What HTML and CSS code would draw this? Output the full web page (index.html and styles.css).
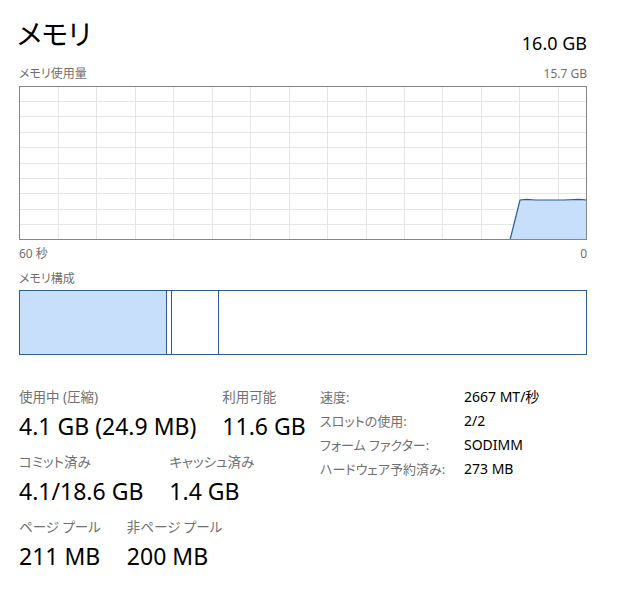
FILE: index.html
```html
<!DOCTYPE html>
<html lang="ja">
<head>
    <meta charset="UTF-8">
    <title>メモリ</title>
    <link rel="stylesheet" href="styles.css">
</head>
<body>
    <div class="perf">
        <div class="perf-head">
            <h1 class="perf-title">メモリ</h1>
            <div class="perf-total">16.0 GB</div>
        </div>
        <div class="chart-caption">
            <span>メモリ使用量</span>
            <span>15.7 GB</span>
        </div>
        <svg class="usage-chart" width="568" height="154" viewBox="0 0 568 154">
            <g stroke="#e6e6e6" stroke-width="1">
                <line x1="0" y1="15.5" x2="568" y2="15.5"/>
                <line x1="0" y1="30.5" x2="568" y2="30.5"/>
                <line x1="0" y1="46.5" x2="568" y2="46.5"/>
                <line x1="0" y1="61.5" x2="568" y2="61.5"/>
                <line x1="0" y1="77.5" x2="568" y2="77.5"/>
                <line x1="0" y1="92.5" x2="568" y2="92.5"/>
                <line x1="0" y1="107.5" x2="568" y2="107.5"/>
                <line x1="0" y1="123.5" x2="568" y2="123.5"/>
                <line x1="0" y1="138.5" x2="568" y2="138.5"/>
                <line x1="39.5" y1="0" x2="39.5" y2="154"/>
                <line x1="77.5" y1="0" x2="77.5" y2="154"/>
                <line x1="116.5" y1="0" x2="116.5" y2="154"/>
                <line x1="154.5" y1="0" x2="154.5" y2="154"/>
                <line x1="193.5" y1="0" x2="193.5" y2="154"/>
                <line x1="231.5" y1="0" x2="231.5" y2="154"/>
                <line x1="270.5" y1="0" x2="270.5" y2="154"/>
                <line x1="308.5" y1="0" x2="308.5" y2="154"/>
                <line x1="347.5" y1="0" x2="347.5" y2="154"/>
                <line x1="385.5" y1="0" x2="385.5" y2="154"/>
                <line x1="423.5" y1="0" x2="423.5" y2="154"/>
                <line x1="462.5" y1="0" x2="462.5" y2="154"/>
                <line x1="500.5" y1="0" x2="500.5" y2="154"/>
                <line x1="539.5" y1="0" x2="539.5" y2="154"/>
            </g>
            <polygon points="491,154 501,114 508,113.4 516,114 545,114 560,113.4 568,114 568,154" fill="#c7dffa"/>
            <polyline points="491,154 501,114 508,113.4 516,114 545,114 560,113.4 568,114" fill="none" stroke="#2b5d92" stroke-width="1.2"/>
            <rect x="0.5" y="0.5" width="567" height="153" fill="none" stroke="#858585"/>
        </svg>
        <div class="chart-caption axis">
            <span>60 秒</span>
            <span>0</span>
        </div>
        <div class="section-caption">メモリ構成</div>
        <div class="composition">
            <div class="seg in-use" style="width: 147px"></div>
            <div class="seg modified" style="width: 5px"></div>
            <div class="seg standby" style="width: 47px"></div>
            <div class="seg free"></div>
        </div>
        <div class="stats">
            <div class="stats-main">
                <div class="stat-row">
                    <div class="stat">
                        <div class="stat-label">使用中 (圧縮)</div>
                        <div class="stat-value">4.1 GB (24.9 MB)</div>
                    </div>
                    <div class="stat">
                        <div class="stat-label">利用可能</div>
                        <div class="stat-value">11.6 GB</div>
                    </div>
                </div>
                <div class="stat-row">
                    <div class="stat">
                        <div class="stat-label">コミット済み</div>
                        <div class="stat-value">4.1/18.6 GB</div>
                    </div>
                    <div class="stat">
                        <div class="stat-label">キャッシュ済み</div>
                        <div class="stat-value">1.4 GB</div>
                    </div>
                </div>
                <div class="stat-row">
                    <div class="stat">
                        <div class="stat-label">ページ プール</div>
                        <div class="stat-value">211 MB</div>
                    </div>
                    <div class="stat">
                        <div class="stat-label">非ページ プール</div>
                        <div class="stat-value">200 MB</div>
                    </div>
                </div>
            </div>
            <div class="stats-side">
                <span class="side-label">速度:</span>
                <span class="side-value">2667 MT/秒</span>
                <span class="side-label">スロットの使用:</span>
                <span class="side-value">2/2</span>
                <span class="side-label">フォーム ファクター:</span>
                <span class="side-value">SODIMM</span>
                <span class="side-label">ハードウェア予約済み:</span>
                <span class="side-value">273 MB</span>
            </div>
        </div>
    </div>
</body>
</html>
```

FILE: styles.css
```css
body {
    margin: 0;
    background: #fff;
    font-family: "Noto Sans", "Noto Sans CJK JP", sans-serif;
    color: #000;
}
.perf {
    width: 568px;
    padding: 14px 31px 0 19px;
}
.perf-head {
    display: flex;
    justify-content: space-between;
    align-items: flex-end;
    height: 44px;
}
.perf-title {
    margin: 0 0 0 -2px;
    padding-bottom: 5px;
    font-family: "Noto Sans CJK JP", sans-serif;
    font-feature-settings: "palt";
    font-size: 28px;
    font-weight: 400;
    line-height: 40px;
}
.perf-total {
    font-size: 18px;
    line-height: 24px;
    padding-bottom: 3px;
}
.chart-caption {
    display: flex;
    justify-content: space-between;
    font-size: 12px;
    line-height: 16px;
    color: #707070;
    margin-top: 8px;
    margin-bottom: 4px;
    font-feature-settings: "palt";
}
.chart-caption.axis {
    margin-top: 6px;
    margin-bottom: 0;
}
.usage-chart {
    display: block;
}
.section-caption {
    font-size: 12px;
    line-height: 16px;
    color: #707070;
    margin-top: 9px;
    margin-bottom: 3px;
    font-feature-settings: "palt";
}
.composition {
    display: flex;
    height: 65px;
    border: 1px solid #2b5d92;
    box-sizing: border-box;
}
.seg {
    box-sizing: border-box;
    border-right: 1px solid #2b5d92;
}
.seg.in-use {
    background: #c7dffa;
}
.seg.free {
    flex: 1;
    border-right: none;
}
.stats {
    display: flex;
    margin-top: 32px;
}
.stats-main {
    width: 301px;
}
.stat-row {
    display: flex;
    gap: 26px;
    margin-bottom: 11px;
}
.stat-label {
    font-size: 13.5px;
    line-height: 20px;
    color: #707070;
    font-feature-settings: "palt";
}
.stat-value {
    margin-top: 4px;
    font-size: 23px;
    line-height: 30px;
    white-space: nowrap;
}
.stats-side {
    display: grid;
    grid-template-columns: 144px auto;
    align-content: start;
    font-size: 13px;
    line-height: 24px;
    font-feature-settings: "palt";
    margin-top: -2px;
}
.side-label {
    color: #707070;
}
.side-value {
    color: #000;
    font-size: 14px;
}
```
